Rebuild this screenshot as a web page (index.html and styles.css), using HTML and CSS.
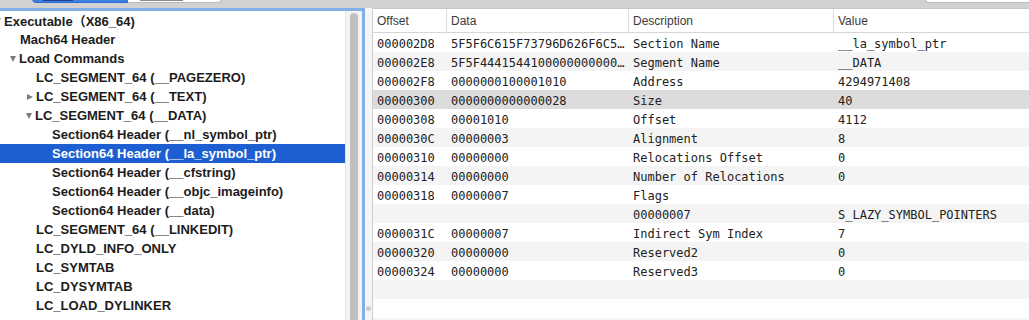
FILE: index.html
```html
<!DOCTYPE html>
<html lang="en">
<head>
  <meta charset="UTF-8" />
  <meta name="viewport" content="width=device-width, initial-scale=1" />
  <title>MachOView</title>
  <link rel="stylesheet" href="styles.css">
</head>
<body>

  <!-- Toolbar (bottom edge only) -->
  <div class="toolbar">
    <div class="seg">
      <span class="seg-on"><i class="seg-mark"></i></span>
      <span class="seg-off"><i class="seg-mark"></i></span>
    </div>
    <div class="search"></div>
  </div>

  <div class="split">

    <!-- Outline -->
    <div class="outline-pane">
      <div class="outline">
        <div class="row l0 open"><i class="disc"></i><span>Executable（X86_64)</span></div>
        <div class="row l1"><span>Mach64 Header</span></div>
        <div class="row l1 open"><i class="disc"></i><span>Load Commands</span></div>
        <div class="row l2"><span>LC_SEGMENT_64 (__PAGEZERO)</span></div>
        <div class="row l2 closed"><i class="disc"></i><span>LC_SEGMENT_64 (__TEXT)</span></div>
        <div class="row l2 open"><i class="disc"></i><span>LC_SEGMENT_64 (__DATA)</span></div>
        <div class="row l3"><span>Section64 Header (__nl_symbol_ptr)</span></div>
        <div class="row l3 selected"><span>Section64 Header (__la_symbol_ptr)</span></div>
        <div class="row l3"><span>Section64 Header (__cfstring)</span></div>
        <div class="row l3"><span>Section64 Header (__objc_imageinfo)</span></div>
        <div class="row l3"><span>Section64 Header (__data)</span></div>
        <div class="row l2"><span>LC_SEGMENT_64 (__LINKEDIT)</span></div>
        <div class="row l2"><span>LC_DYLD_INFO_ONLY</span></div>
        <div class="row l2"><span>LC_SYMTAB</span></div>
        <div class="row l2"><span>LC_DYSYMTAB</span></div>
        <div class="row l2"><span>LC_LOAD_DYLINKER</span></div>
      </div>
      <div class="vscroll"><div class="thumb"></div></div>
    </div>

    <div class="divider"><span class="dimple"></span></div>

    <!-- Detail table -->
    <div class="table-pane">
      <div class="thead">
        <div class="th">Offset</div>
        <div class="th">Data</div>
        <div class="th">Description</div>
        <div class="th">Value</div>
      </div>
      <div class="tbody">
        <div class="tr"><div>000002D8</div><div>5F5F6C615F73796D626F6C5…</div><div>Section Name</div><div>__la_symbol_ptr</div></div>
        <div class="tr"><div>000002E8</div><div>5F5F4441544100000000000…</div><div>Segment Name</div><div>__DATA</div></div>
        <div class="tr"><div>000002F8</div><div>0000000100001010</div><div>Address</div><div>4294971408</div></div>
        <div class="tr current"><div>00000300</div><div>0000000000000028</div><div>Size</div><div>40</div></div>
        <div class="tr"><div>00000308</div><div>00001010</div><div>Offset</div><div>4112</div></div>
        <div class="tr"><div>0000030C</div><div>00000003</div><div>Alignment</div><div>8</div></div>
        <div class="tr"><div>00000310</div><div>00000000</div><div>Relocations Offset</div><div>0</div></div>
        <div class="tr"><div>00000314</div><div>00000000</div><div>Number of Relocations</div><div>0</div></div>
        <div class="tr"><div>00000318</div><div>00000007</div><div>Flags</div><div></div></div>
        <div class="tr"><div></div><div></div><div>00000007</div><div>S_LAZY_SYMBOL_POINTERS</div></div>
        <div class="tr"><div>0000031C</div><div>00000007</div><div>Indirect Sym Index</div><div>7</div></div>
        <div class="tr"><div>00000320</div><div>00000000</div><div>Reserved2</div><div>0</div></div>
        <div class="tr"><div>00000324</div><div>00000000</div><div>Reserved3</div><div>0</div></div>
        <div class="tr"><div></div><div></div><div></div><div></div></div>
        <div class="tr"><div></div><div></div><div></div><div></div></div>
        <div class="tr"><div></div><div></div><div></div><div></div></div>
      </div>
    </div>

  </div>

</body>
</html>
```

FILE: styles.css
```css
html, body {
  margin: 0;
  padding: 0;
  height: 100%;
  overflow: hidden;
}

body {
  font-family: "Liberation Sans", "Noto Sans CJK SC", sans-serif;
  background-color: #fff;
  color: #1c1c1c;
}

/* Toolbar */
.toolbar {
  height: 8px;
  background-color: #d1d1d1;
  display: flex;
  align-items: flex-start;
}

.seg {
  display: flex;
  margin-left: 32px;
  margin-top: -17px;
  height: 20px;
}

.seg-on,
.seg-off {
  display: flex;
  align-items: flex-end;
  box-sizing: border-box;
  height: 20px;
  padding-bottom: 1px;
}

.seg-on {
  width: 96px;
  background-color: #3d7fe4;
  border: 1px solid #2f6cd0;
  border-radius: 0 0 0 4px;
  padding-left: 10px;
}

.seg-on .seg-mark {
  width: 30px;
  height: 3px;
  background-color: #1f3f86;
}

.seg-off {
  width: 94px;
  background-color: #fff;
  border: 1px solid #b9b9b9;
  border-left: none;
  border-radius: 0 0 4px 0;
  padding-left: 12px;
}

.seg-off .seg-mark {
  width: 43px;
  height: 2px;
  background-color: #8a8a8a;
}

.search {
  margin-left: auto;
  margin-top: -17px;
  width: 104px;
  height: 20px;
  box-sizing: border-box;
  background-color: #fff;
  border: 1px solid #bcbcbc;
  border-right: none;
  border-radius: 4px 0 0 4px;
}

/* Split view */
.split {
  display: flex;
  height: 312px;
}

.outline-pane {
  display: flex;
  width: 362px;
  border-top: 3px solid #84aee8;
  border-right: 3px solid #84aee8;
  background-color: #fff;
  overflow: hidden;
}

.outline {
  width: 345px;
  flex-shrink: 0;
}

.row {
  display: flex;
  align-items: center;
  height: 19px;
  font-size: 13px;
  font-weight: bold;
  white-space: nowrap;
}

.l0 { padding-left: 5px; }
.l1 { padding-left: 20px; }
.l2 { padding-left: 36px; }
.l3 { padding-left: 52px; }

.disc {
  flex-shrink: 0;
  width: 0;
  height: 0;
  margin-right: 3px;
}

.open .disc {
  margin-left: -10px;
  border-left: 3.5px solid transparent;
  border-right: 3.5px solid transparent;
  border-top: 6px solid #7c7c7c;
}

.closed .disc {
  margin-left: -9px;
  border-top: 3.5px solid transparent;
  border-bottom: 3.5px solid transparent;
  border-left: 6px solid #7c7c7c;
}

.row.selected {
  background-color: #1d5fd2;
  color: #fff;
}

.vscroll {
  width: 16px;
  flex-shrink: 0;
  background-color: #f3f3f3;
  border-left: 1px solid #e4e4e4;
}

.thumb {
  width: 8px;
  height: 330px;
  margin: 2px 0 0 4px;
  background-color: #c0c0c0;
  border-radius: 4px;
}

.divider {
  width: 7px;
  background-color: #f5f5f5;
  display: flex;
  flex-direction: column;
  justify-content: flex-end;
  align-items: center;
  padding-bottom: 9px;
  box-sizing: border-box;
}

.dimple {
  width: 5px;
  height: 5px;
  border-radius: 50%;
  background-color: #cdcdcd;
}

/* Table */
.table-pane {
  flex: 1;
  border-left: 1px solid #cfcfcf;
  border-top: 1px solid #c9c9c9;
  background-color: #fff;
  overflow: hidden;
}

.thead,
.tr {
  display: grid;
  grid-template-columns: 73px 182px 205px 1fr;
}

.thead {
  height: 23px;
  border-bottom: 1px solid #d6d6d6;
  font-size: 12px;
  color: #3a3a3a;
}

.th {
  display: flex;
  align-items: center;
  padding: 1px 0 0 4px;
}

.th + .th {
  border-left: 1px solid #dedede;
}

.tr {
  height: 19px;
  font-family: "DejaVu Sans Mono", "Liberation Mono", monospace;
  font-size: 12px;
  color: #222;
}

.tr > div {
  display: flex;
  align-items: center;
  box-sizing: border-box;
  padding: 3px 0 0 5px;
  white-space: nowrap;
  overflow: hidden;
}

.tr > div:first-child {
  padding-left: 4px;
}

.tr:nth-child(even) {
  background-color: #f4f4f4;
}

.tr.current {
  background-color: #dcdcdc;
}
```
